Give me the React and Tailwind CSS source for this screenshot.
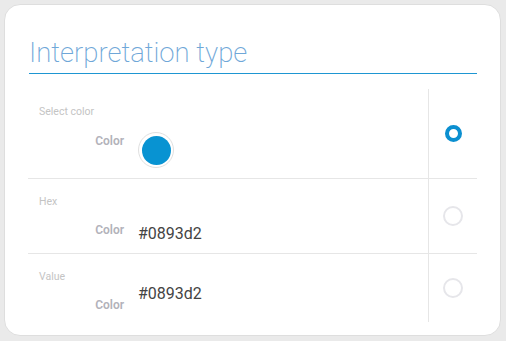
export default function App() {
  const rows = [
    { id: 'select', label: 'Select color', h: 'h-[90px]', checked: true },
    { id: 'hex', label: 'Hex', h: 'h-[75px]', checked: false },
    { id: 'value', label: 'Value', h: 'h-[68px]', checked: false, last: true },
  ];

  return (
    <div className="w-[506px] h-[341px] bg-[#eaeaea] p-1 font-['Roboto',sans-serif]">
      <div className="w-[497px] h-[332px] rounded-[16px] bg-white border border-[#dedede] px-[23px] pt-[33px]">
        {/* Title */}
        <div className="ml-[1px]">
          <div className="pb-[5px] text-[27.5px] leading-[30px] font-extralight text-[#6fa7d8]">
            Interpretation type
          </div>
          <div className="h-px bg-[#1e96d2]" />
        </div>

        {/* Options */}
        <div className="mt-[15px]">
          {rows.map((row) => (
            <div
              key={row.id}
              className={`flex ${row.h} ${row.last ? '' : 'border-b border-[#e6e6e6]'}`}
            >
              <div className="flex-1 pl-[11px] pt-[17px]">
                <div className="text-[10.5px] leading-[12px] text-[#c4c4c4]">{row.label}</div>

                {row.id === 'select' && (
                  <div className="flex items-start gap-[14px] mt-[14px]">
                    <span className="w-[85px] text-right pt-[2px] text-[12px] leading-[14px] font-semibold text-[#b2b2ba]">
                      Color
                    </span>
                    <div className="w-[36px] h-[36px] rounded-full border border-[#e0e0e0] flex items-center justify-center">
                      <div className="w-[29px] h-[29px] rounded-full bg-[#0893d2]" />
                    </div>
                  </div>
                )}

                {row.id === 'hex' && (
                  <div className="flex items-start gap-[14px] mt-[15px]">
                    <span className="w-[85px] text-right text-[12px] leading-[14px] font-semibold text-[#b2b2ba]">
                      Color
                    </span>
                    <span className="pt-[1px] text-[16px] leading-[19px] text-[#444]">#0893d2</span>
                  </div>
                )}

                {row.id === 'value' && (
                  <div className="flex items-start gap-[14px] mt-[1px]">
                    <span className="w-[85px] text-right pt-[14px] text-[12px] leading-[14px] font-semibold text-[#b2b2ba]">
                      Color
                    </span>
                    <span className="text-[16px] leading-[19px] text-[#444]">#0893d2</span>
                  </div>
                )}
              </div>

              {/* Radio */}
              <div className="w-[49px] border-l border-[#e6e6e6] flex items-center justify-center">
                {row.checked ? (
                  <div className="w-[17px] h-[17px] rounded-full border-4 border-[#0b8fd0]" />
                ) : (
                  <div className="w-[20px] h-[20px] rounded-full border-2 border-[#e6e6ea]" />
                )}
              </div>
            </div>
          ))}
        </div>
      </div>
    </div>
  );
}
